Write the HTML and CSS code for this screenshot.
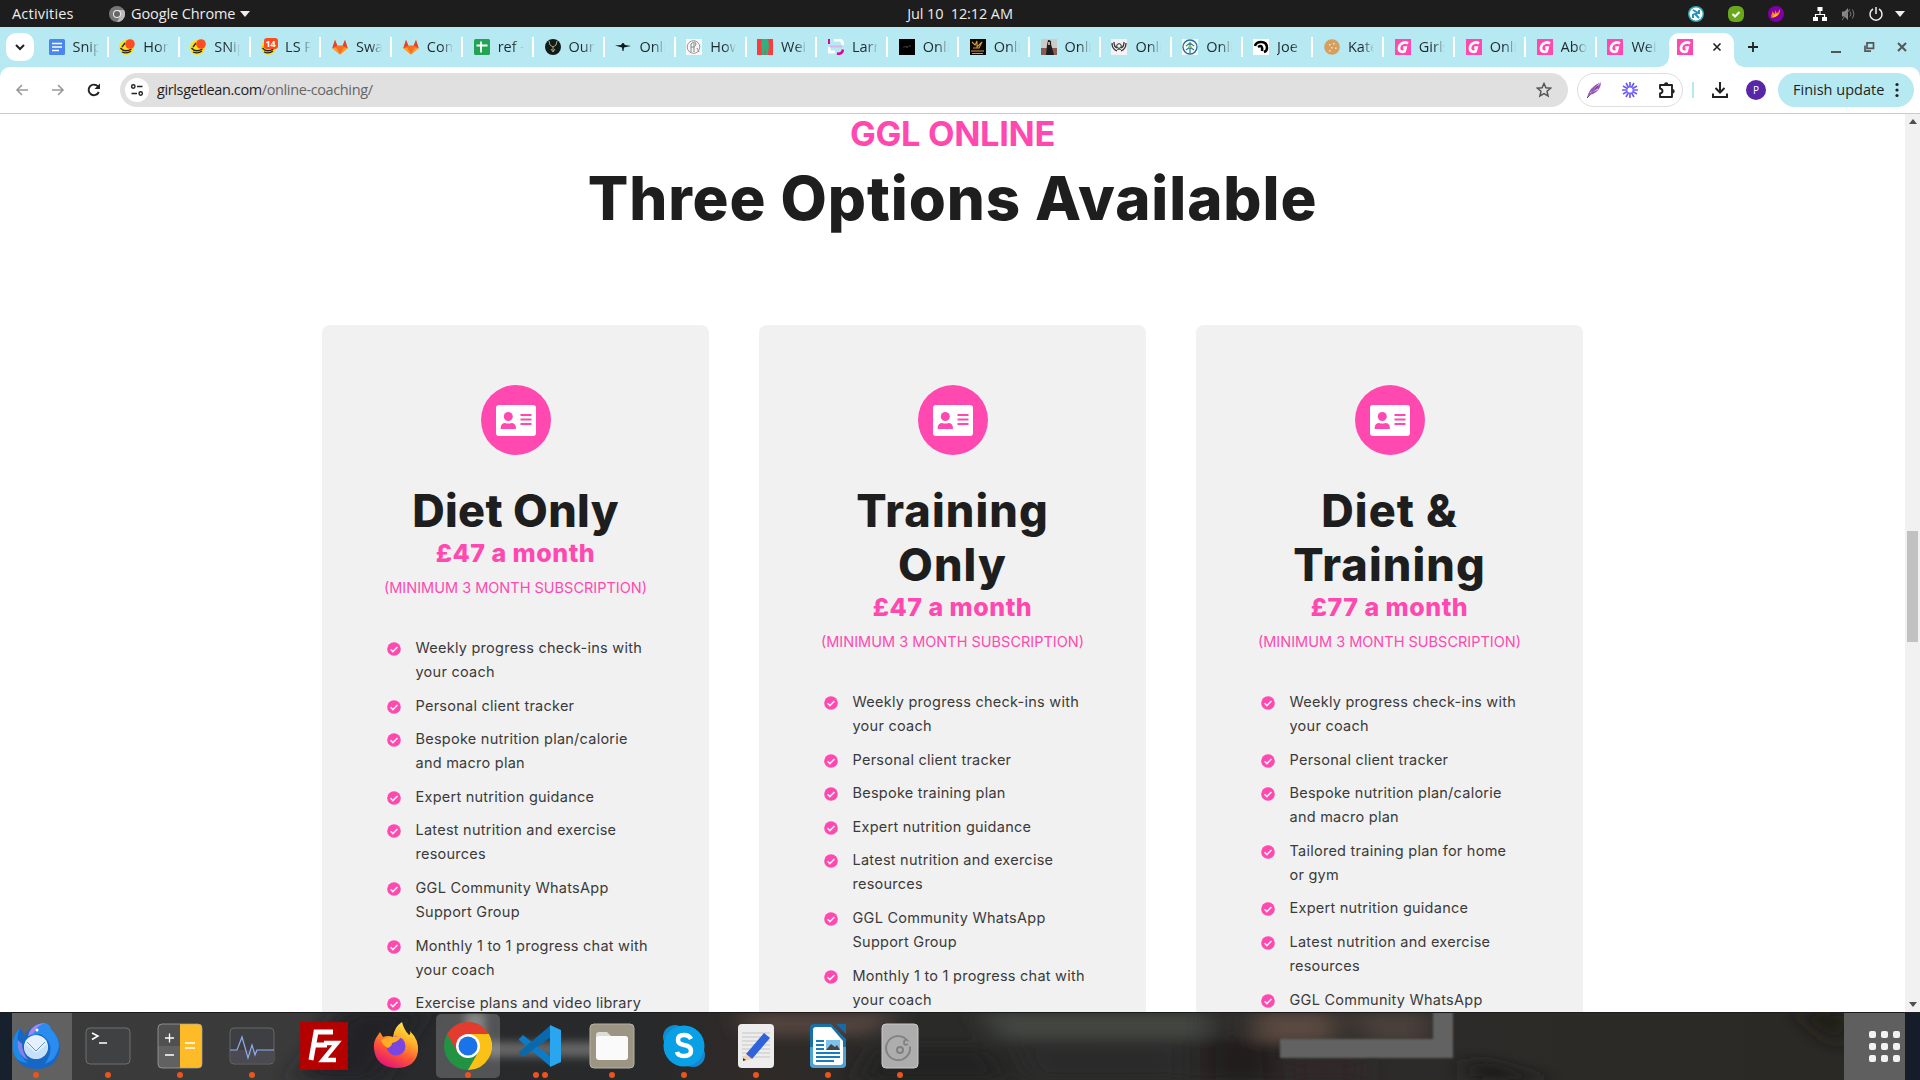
FILE: index.html
```html
<!DOCTYPE html>
<html lang="en">
<head>
<meta charset="utf-8">
<title>Online Coaching</title>
<link rel="stylesheet" href="styles.css">
</head>
<body>
<svg class="defs" aria-hidden="true">
  <symbol id="check" viewBox="0 0 512 512"><circle cx="256" cy="256" r="250" fill="#ff49b0"/><path d="M130 265l85 85 168-168" fill="none" stroke="#f1f1f1" stroke-width="60"/></symbol>
  <symbol id="card" viewBox="0 0 40 31"><rect width="40" height="31" rx="3" fill="#fff"/><g fill="#ff49b0"><circle cx="12.3" cy="11.5" r="4.5"/><path d="M4.7 24v-1.600c0-2.500 1.900-4.400 4.400-4.400 1 .4 2.100.6 3.200.6s2.200-.2 3.200-.6c2.500 0 4.400 1.900 4.400 4.400V24z"/><path d="M24.500 9h11v2h-11zM24.500 13.500h11v2h-11zM24.500 18h11v2h-11z"/></g></symbol>
  <symbol id="g" viewBox="0 0 16 16"><path d="M0 0h16v16H0z" fill="#ff49b0"/><path d="M13 4.300C10 2.500 4.800 3.800 4 8.600c-.5 3.600 2.800 5 5.600 3.700l1-3.700H8.200" fill="none" stroke="#fff" stroke-width="2.700"/></symbol>
  <symbol id="fox" viewBox="0 0 16 16"><path d="M8 15.500L.3 9.300 3 1l2.300 5.500h5.400L13 1l2.700 8.300z" fill="#fc6d26"/><path d="M3 1L.3 9.300 5.300 6.500zM13 1l2.700 8.300-5-2.800z" fill="#e24329"/><path d="M8 15.500L.3 9.300 4 8.500zM8 15.500l7.700-6.200-3.700-.8z" fill="#fca326"/></symbol>
  <symbol id="mail" viewBox="0 0 16 16"><circle cx="7.500" cy="8.500" r="7.500" fill="#fbdf1d"/><path d="M1.500 9q4 5 11 1M3 13q5 2 9-1M3 8l3-4" stroke="#222" stroke-width="1.300" fill="none"/><circle cx="11" cy="5" r="4.800" fill="#ff4b20"/></symbol>
</svg>

<header class="topbar">
  <div class="topbar__left">
    <span class="topbar__activities">Activities</span>
    <svg width="16" height="16" viewBox="0 0 16 16"><circle cx="8" cy="8" r="8" fill="#777"/><path d="M8 4h7a8 8 0 0 1-7 12l3.500-6z" fill="#bbb"/><circle cx="8" cy="8" r="4" fill="#eee"/><circle cx="8" cy="8" r="3" fill="#666"/></svg>
    <span class="topbar__app">Google Chrome</span>
    <i class="tri"></i>
  </div>
  <div class="topbar__clock">Jul 10&nbsp; 12:12 AM</div>
  <div class="topbar__right">
    <svg width="16" height="16" viewBox="0 0 16 16"><circle cx="8" cy="8" r="8" fill="#2fa9b5"/><circle cx="8" cy="8" r="6.500" fill="#fff"/><path d="M5 4l5 3-3 1 4 4M11 4v4M5 8v4" stroke="#2590c8" stroke-width="2" fill="none"/></svg>
    <svg width="16" height="16" viewBox="0 0 16 16"><rect width="16" height="16" rx="6" fill="#68a81b"/><path d="M4.500 8l2.500 2.500L11.500 6" stroke="#fff" stroke-width="2" fill="none"/></svg>
    <svg width="16" height="16" viewBox="0 0 16 16"><circle cx="8" cy="8" r="8" fill="#8000a5"/><path d="M3.500 12c-1-4 1-4 1-7l2 3 1-4 1.500 4L12 3c1 5-3 8-8.500 9z" fill="#ff7a14"/><path d="M5 11c0-3 4-2 5-5 0 3-2 5-5 5z" fill="#ffd21e"/></svg>
    <svg class="topbar__net" width="16" height="16" viewBox="0 0 16 16" fill="#fff"><path d="M5.500 1h5v4h-5zM1 11h5v4H1zM10 11h5v4h-5z"/><path d="M8 5v3.500M3.500 11V8.500h9V11" stroke="#fff" stroke-width="1.200" fill="none"/></svg>
    <svg width="16" height="16" viewBox="0 0 16 16"><path d="M2 5.500h2.500L8 2v12l-3.500-3.500H2z" fill="#888"/><path d="M10 5.500q2 2.500 0 5M12.500 3.500q3 4.500 0 9M2 14L10 3" stroke="#777" fill="none"/></svg>
    <svg width="16" height="16" viewBox="0 0 16 16"><path d="M5 3a6 6 0 1 0 6 0M8 1v7" stroke="#eee" stroke-width="1.500" fill="none"/></svg>
    <i class="tri"></i>
  </div>
</header>

<nav class="tabs">
  <button class="tabs__menu"><svg width="10" height="7" viewBox="0 0 10 7"><path d="M1 1l4 4 4-4" fill="none" stroke="#222" stroke-width="2"/></svg></button>
  <div class="tab"><svg viewBox="0 0 16 16"><rect width="16" height="16" rx="1.500" fill="#4a86f0"/><path d="M3 4.500h10M3 8h10M3 11.500h7" stroke="#fff" stroke-width="1.700"/></svg><span>Snip</span></div>
  <div class="tab"><svg><use href="#mail"/></svg><span>Hom</span></div>
  <div class="tab"><svg><use href="#mail"/></svg><span>SNip</span></div>
  <div class="tab tab--badge"><svg><use href="#mail"/></svg><b>14</b><span>LS P</span></div>
  <div class="tab"><svg><use href="#fox"/></svg><span>Swa</span></div>
  <div class="tab"><svg><use href="#fox"/></svg><span>Com</span></div>
  <div class="tab"><svg viewBox="0 0 16 16"><rect width="16" height="16" rx="1.500" fill="#23a455"/><path d="M2.500 6.500h11M7 2.500v11" stroke="#fff" stroke-width="1.800"/></svg><span>ref -</span></div>
  <div class="tab"><svg viewBox="0 0 16 16"><circle cx="8" cy="8" r="8" fill="#111c18"/><path d="M4 2q0 5 4 6 4-1 4-6M8 8v4M6 10l2 3 2-3" fill="none" stroke="#c3b58c" stroke-width=".9"/></svg><span>Our</span></div>
  <div class="tab"><svg viewBox="0 0 16 16"><path d="M0 6.500l6-.5 1.500-2h1L10 6l6 1-5 1-2 .5L8.500 12h-1L7 8.500z" fill="#0c1a1e"/></svg><span>Onli</span></div>
  <div class="tab"><svg viewBox="0 0 16 16"><path d="M0 0h16v16H0z" fill="#f7f7f7"/><circle cx="7.500" cy="8" r="6.300" fill="none" stroke="#999"/><path d="M5 13V5q4-4 5 0-1 4-5 3M8 4v9M11 9l2 4" fill="none" stroke="#888"/></svg><span>How</span></div>
  <div class="tab"><svg viewBox="0 0 16 16"><path d="M0 0h16v16H0z" fill="#fb3b3f"/><path d="M5 0h6l1 6-1 10H8.500L8 8l-.5 8H5L4 6z" fill="#2fb07c"/></svg><span>Weig</span></div>
  <div class="tab"><svg viewBox="0 0 16 16"><path d="M1 0v5" stroke="#e3009b" stroke-width="2"/><path d="M1 8v5h6M6 1h6q3 1 3 5" stroke="#fff" stroke-width="3" fill="none"/><path d="M2 7.500h12" stroke="#d9b5ec" stroke-width="2"/><path d="M9 14.500q5 1 6-4" stroke="#e3009b" stroke-width="2.500" fill="none"/></svg><span>Larr</span></div>
  <div class="tab"><svg viewBox="0 0 16 16"><path d="M0 0h16v16H0z"/><path d="M4 8h2l1-1 1 2 1-2h3" stroke="#555" stroke-width=".7" fill="none"/></svg><span>Onli</span></div>
  <div class="tab"><svg viewBox="0 0 16 16"><path d="M0 0h16v16H0z" fill="#0b0805"/><path d="M2 3l3 3 2-4v6l5-5-3 6H3M1 12h13M2 14.500h11" stroke="#d39b35" stroke-width="1.100" fill="none"/></svg><span>Onli</span></div>
  <div class="tab"><svg viewBox="0 0 16 16"><path d="M0 0h16v16H0z" fill="#c9ccc9"/><path d="M0 9h16v7H0z" fill="#8a5c51"/><path d="M7 1q4 0 3 4l3 11H5L6 6z" fill="#1c1d22"/><path d="M7 3h2v3H7z" fill="#cf9a82"/></svg><span>Onli</span></div>
  <div class="tab"><svg viewBox="0 0 16 16"><path d="M0 0h16v16H0z" fill="#f1f4f3"/><path d="M1 4q0 6 5 8M15 4q0 6-5 8M3 3q0 5 3 6M13 3q0 5-3 6" stroke="#333" stroke-width="1.300" fill="none"/><circle cx="8" cy="7" r="2.300" fill="none" stroke="#222"/><path d="M5 12q3-4 6 0" stroke="#333" fill="none"/></svg><span>Onli</span></div>
  <div class="tab"><svg viewBox="0 0 16 16"><path d="M0 0h16v16H0z" fill="#f4f9f9"/><circle cx="8" cy="8" r="7" fill="none" stroke="#2b6a8e" stroke-width="1.300"/><path d="M8 3v11M4 11l4-3 4 3M4 7l4-3 4 3" stroke="#3c86a0" stroke-width="1.300" fill="none"/><circle cx="8" cy="7.500" r="1.500" fill="#9ec34c"/></svg><span>Onli</span></div>
  <div class="tab"><svg viewBox="0 0 16 16"><path d="M0 0h16v16H0z" fill="#fff"/><path d="M2 7q1-4 6-4 6 0 6 6 0 3-3 4M5 8q5-3 4 4" fill="none" stroke="#000" stroke-width="2.500"/></svg><span>Joe I</span></div>
  <div class="tab"><svg viewBox="0 0 16 16"><circle cx="8" cy="8" r="7.800" fill="#d69f60"/><path d="M5 5h1.500v1.500H5zM9 4h1.500v1.500H9zM7 8h1.500v1.500H7zM11 8.500h1.500V10H11zM5 11h1.500v1.500H5z" fill="#fbe3bd"/></svg><span>Kate</span></div>
  <div class="tab"><svg><use href="#g"/></svg><span>Girls</span></div>
  <div class="tab"><svg><use href="#g"/></svg><span>Onli</span></div>
  <div class="tab"><svg><use href="#g"/></svg><span>Abo</span></div>
  <div class="tab tab--last"><svg><use href="#g"/></svg><span>Wei</span></div>
  <div class="tab--active"><svg width="16" height="16"><use href="#g"/></svg><svg width="10" height="10" viewBox="0 0 10 10"><path d="M1.500 1.500l7 7M8.500 1.500l-7 7" stroke="#222" stroke-width="1.600"/></svg></div>
  <svg class="tabs__plus" width="12" height="12" viewBox="0 0 12 12"><path d="M6 1v10M1 6h10" stroke="#222" stroke-width="1.800"/></svg>
  <div class="tabs__win">
    <svg width="12" height="12" viewBox="0 0 12 12"><path d="M1 11h10" stroke="#555" stroke-width="2"/></svg>
    <svg width="12" height="12" viewBox="0 0 12 12"><path d="M4 1.800h6.500v5.500H4z M2 4.500v5.700h6" fill="none" stroke="#555" stroke-width="1.700"/></svg>
    <svg width="12" height="12" viewBox="0 0 12 12"><path d="M2 2l8 8M10 2l-8 8" stroke="#555" stroke-width="2"/></svg>
  </div>
</nav>

<div class="toolbar">
  <svg class="toolbar__nav" viewBox="0 0 16 16"><path d="M14 8H3M8 3L3 8l5 5" fill="none" stroke="#999" stroke-width="1.600"/></svg>
  <svg class="toolbar__nav" viewBox="0 0 16 16"><path d="M2 8h11M8 3l5 5-5 5" fill="none" stroke="#999" stroke-width="1.600"/></svg>
  <svg class="toolbar__nav" viewBox="0 0 16 16"><path d="M12.800 10A5.300 5.300 0 1 1 12 4.500" fill="none" stroke="#222" stroke-width="1.900"/><path d="M14 1.500V7H8.500z" fill="#222"/></svg>
  <div class="omnibox">
    <span class="omnibox__site"><svg width="14" height="14" viewBox="0 0 14 14"><path d="M7 3.500h5.500M1.500 10.500H7" stroke="#222" stroke-width="1.700"/><circle cx="3.300" cy="3.500" r="1.700" fill="none" stroke="#222" stroke-width="1.400"/><circle cx="10.700" cy="10.500" r="1.700" fill="none" stroke="#222" stroke-width="1.400"/></svg></span>
    <span class="omnibox__url">girlsgetlean.com<em>/online-coaching/</em></span>
    <svg width="16" height="16" viewBox="0 0 16 16"><path d="M8 1.500l1.900 4.300 4.700.4-3.600 3.100 1.100 4.600L8 11.500l-4.100 2.400L5 9.300 1.400 6.200l4.700-.4z" fill="none" stroke="#555" stroke-width="1.500"/></svg>
  </div>
  <div class="exts">
    <svg width="16" height="18" viewBox="0 0 16 18"><path d="M1 17Q3 6 15 1q0 8-8 12-3 0-6 4z" fill="#9a55b8"/><path d="M1 17L15 1M4 12l8-4" stroke="#e6cff0"/><path d="M1 17L12 5" stroke="#5c2c80"/></svg>
    <svg width="18" height="18" viewBox="0 0 18 18"><path d="M9 1v16M1 9h16M5 2l8 14M13 2L5 16M2 5l14 8M16 5L2 13" stroke="#6c5cf5" stroke-width="1.700"/><circle cx="9" cy="9" r="2.600" fill="#fff"/></svg>
    <svg width="18" height="18" viewBox="0 0 18 18"><path d="M2 4h12v12H2v-3.500q2.500-.5 2.500-2.500T2 7.500z" fill="none" stroke="#222" stroke-width="1.900" stroke-linejoin="round"/><path d="M6 3.500a2.200 2.200 0 0 1 4.400 0zM14.500 8a2.200 2.200 0 0 1 0 4.400z" fill="#222"/></svg>
  </div>
  <i class="toolbar__sep"></i>
  <svg width="18" height="18" viewBox="0 0 18 18"><path d="M9 1v10M4.500 7L9 11.500 13.500 7M2 12.500V16h14v-3.500" fill="none" stroke="#222" stroke-width="2"/></svg>
  <span class="avatar">P</span>
  <div class="update">Finish update<svg width="4" height="16" viewBox="0 0 4 16" fill="#222"><circle cx="2" cy="2.500" r="1.600"/><circle cx="2" cy="8" r="1.600"/><circle cx="2" cy="13.500" r="1.600"/></svg></div>
</div>

<div class="viewport">
  <main class="page">
    <h4 class="eyebrow">GGL ONLINE</h4>
    <h2 class="title">Three Options Available</h2>
    <div class="plans">
      <section class="plan">
        <div class="plan__icon"><svg width="40" height="31"><use href="#card"/></svg></div>
        <h3 class="plan__name">Diet Only</h3>
        <p class="plan__price">£47 a month</p>
        <p class="plan__note">(MINIMUM 3 MONTH SUBSCRIPTION)</p>
        <ul class="plan__list">
          <li><svg><use href="#check"/></svg><span>Weekly progress check-ins with<br>your coach</span></li>
          <li><svg><use href="#check"/></svg><span>Personal client tracker</span></li>
          <li><svg><use href="#check"/></svg><span>Bespoke nutrition plan/calorie<br>and macro plan</span></li>
          <li><svg><use href="#check"/></svg><span>Expert nutrition guidance</span></li>
          <li><svg><use href="#check"/></svg><span>Latest nutrition and exercise<br>resources</span></li>
          <li><svg><use href="#check"/></svg><span>GGL Community WhatsApp<br>Support Group</span></li>
          <li><svg><use href="#check"/></svg><span>Monthly 1 to 1 progress chat with<br>your coach</span></li>
          <li><svg><use href="#check"/></svg><span>Exercise plans and video library</span></li>
        </ul>
      </section>
      <section class="plan">
        <div class="plan__icon"><svg width="40" height="31"><use href="#card"/></svg></div>
        <h3 class="plan__name plan__name--wide">Training<br>Only</h3>
        <p class="plan__price">£47 a month</p>
        <p class="plan__note">(MINIMUM 3 MONTH SUBSCRIPTION)</p>
        <ul class="plan__list">
          <li><svg><use href="#check"/></svg><span>Weekly progress check-ins with<br>your coach</span></li>
          <li><svg><use href="#check"/></svg><span>Personal client tracker</span></li>
          <li><svg><use href="#check"/></svg><span>Bespoke training plan</span></li>
          <li><svg><use href="#check"/></svg><span>Expert nutrition guidance</span></li>
          <li><svg><use href="#check"/></svg><span>Latest nutrition and exercise<br>resources</span></li>
          <li><svg><use href="#check"/></svg><span>GGL Community WhatsApp<br>Support Group</span></li>
          <li><svg><use href="#check"/></svg><span>Monthly 1 to 1 progress chat with<br>your coach</span></li>
        </ul>
      </section>
      <section class="plan">
        <div class="plan__icon"><svg width="40" height="31"><use href="#card"/></svg></div>
        <h3 class="plan__name plan__name--wide">Diet &amp;<br>Training</h3>
        <p class="plan__price">£77 a month</p>
        <p class="plan__note">(MINIMUM 3 MONTH SUBSCRIPTION)</p>
        <ul class="plan__list">
          <li><svg><use href="#check"/></svg><span>Weekly progress check-ins with<br>your coach</span></li>
          <li><svg><use href="#check"/></svg><span>Personal client tracker</span></li>
          <li><svg><use href="#check"/></svg><span>Bespoke nutrition plan/calorie<br>and macro plan</span></li>
          <li><svg><use href="#check"/></svg><span>Tailored training plan for home<br>or gym</span></li>
          <li><svg><use href="#check"/></svg><span>Expert nutrition guidance</span></li>
          <li><svg><use href="#check"/></svg><span>Latest nutrition and exercise<br>resources</span></li>
          <li><svg><use href="#check"/></svg><span>GGL Community WhatsApp</span></li>
        </ul>
      </section>
    </div>
  </main>
  <div class="scrollbar"><i class="scrollbar__up"></i><i class="scrollbar__thumb"></i><i class="scrollbar__down"></i></div>
</div>

<footer class="dock">
  <svg class="dock__wall" width="1920" height="68" viewBox="0 0 1920 68" preserveAspectRatio="none">
    <defs>
      <filter id="b" x="-20%" y="-50%" width="140%" height="200%"><feGaussianBlur stdDeviation="14 6"/></filter>
      <filter id="s" x="-10%" y="-30%" width="120%" height="160%"><feGaussianBlur stdDeviation="4"/></filter>
      <filter id="e" x="-10%" y="-30%" width="120%" height="160%"><feGaussianBlur stdDeviation="1"/></filter>
      <linearGradient id="w"><stop offset="0" stop-color="#3b3b3b"/><stop offset=".16" stop-color="#3a3a3a"/><stop offset=".19" stop-color="#282a2b"/><stop offset=".33" stop-color="#27292b"/><stop offset=".39" stop-color="#302a28"/><stop offset=".46" stop-color="#2a2a29"/><stop offset=".7" stop-color="#2c2b29"/><stop offset=".96" stop-color="#2b2925"/></linearGradient>
    </defs>
    <path d="M0 0h1920v68H0z" fill="url(#w)"/>
    <g filter="url(#b)">
      <path d="M345 0h75l-45 68h-80z" fill="#222425"/>
      <path d="M740 0h160l-30 24H750z" fill="#51433c"/>
      <path d="M980 0h230v28h-210z" fill="#434540"/>
      <path d="M880 35h110l20 33H860z" fill="#222"/>
      <path d="M1010 32h180v36h-160z" fill="#2c2c2a"/>
      <path d="M1205 25h70v43h-70z" fill="#211f1d"/>
      <path d="M1255 0h80v30h-80z" fill="#5a493f"/>
      <path d="M1350 0h80v30h-65z" fill="#493f3b"/>
      <path d="M1290 48h70v20h-70z" fill="#302825"/>
      <path d="M1470 45l80 23h-80z" fill="#1f1e1d"/>
      <path d="M1800 0h44v40z" fill="#1b1a17"/>
    </g>
    <path d="M465 0h20v30h-20zM485 30h140v15H485z" fill="#666" filter="url(#s)"/>
    <path d="M1433 0h20v46h-173V27h153z" fill="#626262" filter="url(#e)"/>
    <path d="M0 0h12v68H0z" fill="#17212d"/><path d="M12 0h60v68H12z" fill="#616161"/>
    <path d="M1844 0h61v68h-61z" fill="#5f5f5f"/><path d="M1905 0h15v68h-15z" fill="#161c29"/>
    <path d="M0 .5h1920" stroke="#1b1b1b"/>
  </svg>
  <div class="dock__apps">
    <div class="app"><svg viewBox="0 0 48 48"><path d="M1 28Q-1 15 8 6q3 3 4 8Q20 1 33 1q5 1 6 6 9 8 9 19-2 21-24 21Q4 46 1 28z" fill="#1667c6"/><path d="M16 14Q20 1 33 1q5 1 6 6 8 8 8 17-2 14-14 18Q46 22 28 12z" fill="#2a8cee"/><path d="M16 14q3-12 17-13-9 3-11 10z" fill="#ab83ee"/><path d="M8 6q-5 10 0 20 0 9 8 15Q2 40 1 28-1 15 8 6z" fill="#1c8ae9"/><path d="M6 18q-2 14 10 20-6-8-6-16z" fill="#8a7fe6"/><circle cx="24" cy="25" r="12" fill="#e4f1fc"/><path d="M13 22l11 9 11-9q2 6-2 11-9 7-17 1-5-5-3-12z" fill="#c6e0f8"/><path d="M15 20l9 9 9-9" fill="none" stroke="#5f97ca"/><circle cx="25" cy="8" r="1.500" fill="#fff"/></svg><i></i></div>
    <div class="app"><svg viewBox="0 0 48 48"><rect x="2" y="6" width="44" height="36" rx="4" fill="#3f4142" stroke="#707070"/><path d="M8 11l6 3-6 3.500" fill="none" stroke="#fff" stroke-width="1.500"/><path d="M15 21h8" stroke="#fff" stroke-width="1.500"/></svg><i></i></div>
    <div class="app"><svg viewBox="0 0 48 48"><rect x="2" y="2" width="44" height="44" rx="4" fill="#505050"/><path d="M2 24h22v22H6a4 4 0 0 1-4-4z" fill="#616161"/><path d="M24 2h18a4 4 0 0 1 4 4v36a4 4 0 0 1-4 4H24z" fill="#fcbb27"/><path d="M9 16h9M13.500 11.500v9M9 33h9M29 21h10M29 26h10" stroke="#fff" stroke-width="1.300"/><rect x="2" y="2" width="44" height="44" rx="4" fill="none" stroke="#aaa" stroke-width=".7"/></svg><i></i></div>
    <div class="app"><svg viewBox="0 0 48 48"><rect x="2" y="6" width="44" height="36" rx="4" fill="#3d3f42" stroke="#666"/><path d="M3 28h43v10q0 3-3 3H6q-3 0-3-3z" fill="#4a4a50"/><path d="M2 28h7l5-13 6 21 4-13 3 10 2-5h17" fill="none" stroke="#8fadf0" stroke-width="1.200"/></svg><i></i></div>
    <div class="app app--off"><svg viewBox="0 0 48 48"><path d="M2 2h44v44H2z" fill="#b50000"/><path d="M2 2h44v44H2z" fill="none" stroke="#b50000" stroke-width="4" stroke-dasharray="4 3.330" stroke-linecap="round"/><path d="M11 38l5-28h17M13 23h14" stroke="#fff" stroke-width="5" fill="none"/><path d="M24 21h13L23 38h13" stroke="#fff" stroke-width="4.500" fill="none"/></svg><i></i></div>
    <div class="app app--off"><svg viewBox="0 0 48 48"><defs><linearGradient id="ff" x1="0.800" y1="0" x2="0.300" y2="1"><stop offset="0" stop-color="#fff44f"/><stop offset=".35" stop-color="#ffae29"/><stop offset=".65" stop-color="#ff5636"/><stop offset="1" stop-color="#e2127b"/></linearGradient></defs><path d="M2 27q-1-8 4-14l2-3 3 5q5-2 10 0Q22 5 30 0q2 8 7 13 2-1 1-4 9 9 8 20-2 17-22 17Q4 45 2 27z" fill="url(#ff)"/><circle cx="24" cy="24" r="9.500" fill="#7b45df"/><path d="M9 18q9-4 20-3-3 5-9 6 0 3-4 5-5-2-7-8z" fill="#ffad25"/></svg><i></i></div>
    <div class="app app--active"><svg viewBox="0 0 48 48"><circle cx="24" cy="24" r="24" fill="#229342"/><path d="M24 24L3.200 12A24 24 0 0 1 44.800 12z" fill="#e33b2e"/><path d="M24 12h20.800A24 24 0 0 1 24 48l10.400-18z" fill="#fbc116"/><path d="M3.200 12l10.400 18L24 12z" fill="#e33b2e"/><circle cx="24" cy="24" r="12" fill="#fff"/><circle cx="24" cy="24" r="9.500" fill="#1a73e8"/></svg><i></i></div>
    <div class="app"><svg viewBox="0 0 48 48"><path d="M3 17l4-4 28 22v10L3 18z" fill="#0f7bc4"/><path d="M3 31l4 4 28-20V3L3 30z" fill="#0a68ad"/><path d="M34 3l11 5v32l-11 5z" fill="#2aa5f0"/></svg><i></i><i></i></div>
    <div class="app"><svg viewBox="0 0 48 48"><rect x="2" y="2" width="44" height="44" rx="4" fill="#9c9583" stroke="#b6b1a3"/><path d="M8 13q0-3 3-3h8l4 4h14q3 0 3 3v10H8z" fill="#dedcd6"/><rect x="8" y="14" width="32" height="24" rx="3" fill="#fafafa"/></svg><i></i></div>
    <div class="app"><svg viewBox="0 0 48 48"><circle cx="15" cy="15" r="12" fill="#0e8dce"/><circle cx="33" cy="33" r="12" fill="#1487cf"/><circle cx="24" cy="24" r="20.500" fill="#0aa0e6"/><path d="M31 17q-2-4-7-4-6 0-6 5 0 4 6 5 7 1 7 6t-7 5q-6 0-7-4" fill="none" stroke="#fff" stroke-width="4.500"/></svg><i></i></div>
    <div class="app"><svg viewBox="0 0 48 48"><rect x="6" y="2" width="36" height="44" rx="4" fill="#ededed"/><path d="M10 11h28M10 15h28M10 19h28M10 23h28M10 27h28M10 31h28M10 35h28" stroke="#c5c5c5"/><path d="M32 11l6 5-18 21-6-5z" fill="#2f62dd"/><path d="M14 32l6 5-9 2z" fill="#f2d2af"/><path d="M11 36v3l3-1z" fill="#333"/></svg><i></i></div>
    <div class="app"><svg viewBox="0 0 48 48"><path d="M10 2h17l15 15v25q0 4-4 4H10q-4 0-4-4V6q0-4 4-4z" fill="#1870a8"/><path d="M6 25h36v17q0 4-4 4H10q-4 0-4-4z" fill="#4ba4d4"/><path d="M12 5h15l12 14v21q0 3-3 3H12q-3 0-3-3V8q0-3 3-3z" fill="#fff"/><path d="M32 2h10v10z" fill="#146ba6"/><path d="M12 19h8M12 23h8M12 27h8M12 31h24M12 35h24M12 39h18" stroke="#177eb9" stroke-width="1.800"/><path d="M22 18h14v10H22z" fill="#7fc2e9"/><path d="M22 28l5-6 4 3 2-2 3 5z" fill="#444"/></svg><i></i></div>
    <div class="app"><svg viewBox="0 0 48 48"><rect x="6" y="2" width="36" height="44" rx="4" fill="#adadad" stroke="#c9c9c9"/><path d="M34 24.500A12 12 0 1 1 31 18q-3-1-3 3 0 3 4 1" fill="none" stroke="#808080" stroke-width="1.800"/><circle cx="24" cy="28" r="3" fill="none" stroke="#808080" stroke-width="2"/></svg><i></i></div>
  </div>
  <div class="dock__grid"><i></i><i></i><i></i><i></i><i></i><i></i><i></i><i></i><i></i></div>
</footer>
</body>
</html>
```
FILE: styles.css
```css
* { box-sizing: border-box; }
body { margin: 0; width: 1920px; height: 1080px; overflow: hidden; display: flex; flex-direction: column; background: #fff; font-family: "Open Sans", "Noto Sans", sans-serif; font-size: 14.5px; }
svg { display: block; flex: none; }
h2, h3, h4, p, ul { margin: 0; padding: 0; }
.defs { position: absolute; width: 0; height: 0; }

/* Desktop top bar */
.topbar { height: 27px; flex: none; display: grid; grid-template-columns: 1fr auto 1fr; align-items: center; background: #1d1d1d; color: #ececec; line-height: 27px; }
.topbar__left { display: flex; align-items: center; padding-left: 12px; }
.topbar__activities { width: 97px; letter-spacing: .2px; }
.topbar__app { margin: 0 5px 0 6px; letter-spacing: -.1px; }
.topbar__clock { letter-spacing: -.1px; }
.topbar__right { display: flex; align-items: center; justify-content: flex-end; gap: 24px; padding-right: 15px; }
.topbar__net { margin-left: 4px; }
.topbar__right svg:nth-child(n+5), .topbar__right .tri { margin-left: -12px; }
.topbar__right .tri { margin-left: -13px; }
.tri { border: 5px solid transparent; border-top: 6px solid #eee; border-bottom: 0; }

/* Tab strip */
.tabs { height: 40px; flex: none; display: flex; align-items: center; background: #b6e9f2; }
.tabs__menu { width: 28px; height: 28px; margin: 0 4px 0 6px; padding: 0; border: 0; border-radius: 10px; background: #fff; display: grid; place-items: center; }
.tab { position: relative; width: 70.860px; height: 20px; flex: none; display: flex; align-items: center; gap: 8px; padding-left: 10.500px; border-right: 2px solid #fff; }
.tab--last { border-color: transparent; }
.tab svg { width: 16px; height: 16px; }
.tab span { width: 26px; overflow: hidden; white-space: nowrap; color: #1f2a2d; line-height: 24px; -webkit-mask-image: linear-gradient(90deg, #000 55%, transparent); mask-image: linear-gradient(90deg, #000 55%, transparent); }
.tab--badge b { position: absolute; left: 13px; top: 1px; width: 14px; background: #ff4b20; border-radius: 3px; color: #fff; font-size: 9px; line-height: 11px; text-align: center; }
.tab--active { position: relative; width: 65px; height: 34px; flex: none; align-self: flex-end; margin-left: 1px; background: #fff; border-radius: 10px 10px 0 0; display: flex; align-items: center; justify-content: space-between; padding: 0 12px 6px 8px; }
.tab--active::before, .tab--active::after { content: ""; position: absolute; bottom: 0; width: 10px; height: 10px; }
.tab--active::before { left: -10px; background: radial-gradient(circle at 0 0, transparent 9.500px, #fff 10px); }
.tab--active::after { right: -10px; background: radial-gradient(circle at 100% 0, transparent 9.500px, #fff 10px); }
.tabs__plus { margin-left: 13px; }
.tabs__win { margin-left: auto; padding-right: 12px; display: flex; gap: 21px; }

/* Address bar */
.toolbar { height: 47px; flex: none; display: flex; align-items: center; padding: 0 6px 1px 14px; border-bottom: 1px solid #cbcbcb; background: linear-gradient(#b6e9f2 50%, #fff 50%); position: relative; z-index: 0; }
.toolbar::before { content: ""; position: absolute; z-index: -1; inset: 0; background: #fff; border-radius: 10px 10px 0 0; }
.toolbar__nav { width: 16px; height: 16px; margin-right: 20px; }
.toolbar__nav:nth-child(3) { margin-right: 18px; }
.omnibox { width: 1448px; height: 34px; border-radius: 17px; background: #e0e0e0; display: flex; align-items: center; padding: 0 16px 0 5px; }
.omnibox__site { width: 24px; height: 24px; border-radius: 50%; background: #fff; display: grid; place-items: center; }
.omnibox__url { flex: 1; margin-left: 8px; color: #1f1f1f; letter-spacing: -.38px; }
.omnibox__url em { font-style: normal; color: #666; }
.exts { width: 106px; height: 34px; margin-left: 9px; border: 1px solid #ddd; border-radius: 17px; display: flex; align-items: center; justify-content: space-between; padding: 0 6px 0 8px; }
.toolbar__sep { width: 2px; height: 16px; margin: 0 17px 0 9px; background: #b6e9f2; }
.avatar { width: 20px; height: 20px; margin: 0 12px 0 17px; border-radius: 50%; background: #5727a8; color: #fff; font-size: 10px; line-height: 20px; text-align: center; }
.update { width: 136px; height: 34px; border-radius: 17px; background: #b6e9f2; color: #1f1f1f; display: flex; align-items: center; justify-content: space-between; padding: 0 15px; white-space: nowrap; }

/* Web page */
.viewport { height: 898px; flex: none; display: flex; overflow: hidden; font-family: Inter, "Open Sans", sans-serif; }
.page { width: 1905px; text-align: center; }
.eyebrow { font-size: 34.400px; line-height: 39px; font-weight: 700; color: #ff49b0; letter-spacing: -.3px; }
.title { margin-top: 9px; font-size: 60px; line-height: 72px; font-weight: 800; color: #1e1e1e; letter-spacing: .9px; }
.plans { margin: 91px 0 0 322px; display: flex; gap: 50px; }
.plan { width: 387px; height: 800px; padding-top: 60px; border-radius: 8px; background: #f1f1f1; }
.plan__icon { width: 70px; height: 70px; margin: 0 auto; border-radius: 50%; background: #ff49b0; display: grid; place-items: center; }
.plan__name { margin-top: 29px; font-size: 45px; line-height: 54px; font-weight: 800; color: #1e1e1e; letter-spacing: .3px; }
.plan__name--wide { letter-spacing: 1.100px; }
.plan__price { font-size: 25px; line-height: 30px; font-weight: 800; color: #ff49b0; letter-spacing: .5px; }
.plan__note { margin-top: 8px; font-size: 14.500px; line-height: 24px; color: #ff49b0; }
.plan__list { margin: 36px 0 0 65px; list-style: none; text-align: left; font-size: 14.500px; line-height: 24px; letter-spacing: .25px; color: #3a3a3a; }
.plan__list li { display: flex; gap: 14.500px; margin-bottom: 9.600px; white-space: nowrap; }
.plan__list svg { width: 14px; height: 14px; margin-top: 6px; }
.scrollbar { width: 15px; background: #f1f1f1; display: flex; flex-direction: column; align-items: center; padding: 5px 0; }
.scrollbar i { flex: none; }
.scrollbar__up { border: 4px solid transparent; border-bottom: 5px solid #505050; border-top: 0; }
.scrollbar__down { margin-top: auto; border: 4px solid transparent; border-top: 5px solid #505050; border-bottom: 0; }
.scrollbar__thumb { width: 11px; height: 111px; margin-top: 407px; background: #c1c1c1; }

/* Dock */
.dock { position: relative; height: 68px; flex: none; display: flex; justify-content: space-between; }
.dock__wall { position: absolute; inset: 0; }
.dock__apps { position: relative; display: flex; }
.app { width: 64px; height: 64px; margin: 2px 8px 0 0; padding: 8px 8px 0; border-radius: 5px; display: flex; flex-wrap: wrap; justify-content: center; align-content: flex-start; column-gap: 3px; }
.app:first-child { margin-left: 4px; }
.app svg { width: 48px; height: 48px; margin-bottom: 2px; }
.app--active { background: rgba(255, 255, 255, .2); }
.app i { width: 6px; height: 6px; border-radius: 50%; background: #e95420; }
.app--off i { visibility: hidden; }
.dock__grid { position: relative; align-self: center; margin: 0 20px 0 0; display: grid; grid-template-columns: repeat(3, 7px); gap: 5px; }
.dock__grid i { height: 7px; border-radius: 2px; background: #f2f2f2; }
```
